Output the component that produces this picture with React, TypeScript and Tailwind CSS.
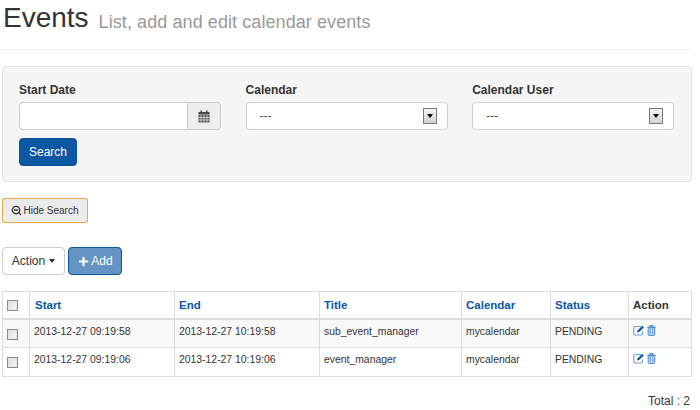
import React from 'react';
import { Plus, ZoomOut } from 'lucide-react';

const rows = [
  { start: '2013-12-27 09:19:58', end: '2013-12-27 10:19:58', title: 'sub_event_manager' },
  { start: '2013-12-27 09:19:06', end: '2013-12-27 10:19:06', title: 'event_manager' },
];

const Check = () => (
  <span className="block w-[11px] h-[11px] border border-[#8a8a8a] bg-gradient-to-br from-[#dcdcdc] to-[#fbfbfb] shadow-[inset_0_0_0_1px_#e4e4e4]" />
);

const CalendarIcon = () => (
  <svg width="12" height="13" viewBox="0 0 12 13">
    <rect x="0.5" y="2" width="11" height="2.5" fill="#444" />
    <rect x="2.5" y="0.5" width="1.5" height="2" fill="#444" />
    <rect x="8" y="0.5" width="1.5" height="2" fill="#444" />
    <rect x="0.5" y="5" width="11" height="7.5" fill="#555" />
    <path d="M3 5v7.5M6 5v7.5M9 5v7.5M.5 7.5h11M.5 10h11" stroke="#ddd" strokeWidth="0.8" />
  </svg>
);

const EditIcon = () => (
  <svg width="12" height="11" viewBox="0 0 12 11" fill="none">
    <path d="M8 1.5H2A1.2 1.2 0 0 0 .8 2.7v6.1A1.2 1.2 0 0 0 2 10h6.2a1.2 1.2 0 0 0 1.2-1.2V6.5" stroke="#6f9fd0" strokeWidth="1.1" />
    <path d="M4 7.6l.5-2L9.3.8l1.6 1.6-4.8 4.7z" fill="#0b57a4" />
  </svg>
);

const TrashIcon = () => (
  <svg width="9" height="11" viewBox="0 0 9 11" fill="none">
    <path d="M.3 2.2h8.4M3 2V.7h3V2" stroke="#2a6fb0" strokeWidth="1" />
    <rect x="1.2" y="3" width="6.6" height="7.4" rx="0.8" stroke="#428bca" strokeWidth="1" fill="#cfe0f0" />
    <path d="M3.2 4.2v5M5.8 4.2v5" stroke="#428bca" strokeWidth="0.9" />
  </svg>
);

const SelectBox = () => (
  <div className="relative w-[202px] h-7 bg-white border border-[#ccc] rounded flex items-center pl-[13px] text-xs text-[#555]">
    <span>---</span>
    <span className="absolute right-[10px] top-[5px] w-[14px] h-[16px] border border-[#777] bg-gradient-to-b from-[#f4f4f4] to-[#d4d4d4] flex items-center justify-center">
      <span className="w-0 h-0 border-x-[3px] border-x-transparent border-t-[4px] border-t-black" />
    </span>
  </div>
);

export default function App() {
  const th = 'border border-[#ddd] border-b-2 px-[4px] pt-[1px] text-left font-bold';
  const td = 'border border-[#ddd] px-[4px] pt-[5px] align-top font-normal';

  return (
    <div className="w-[700px] h-[410px] bg-white overflow-hidden font-['Liberation_Sans',Arial,sans-serif] text-xs text-[#333]">
      <div className="mx-[2px] w-[690px]">
        {/* Page header */}
        <div className="h-[50px] border-b border-[#eee] flex items-baseline pl-[1px]">
          <h1 className="text-[28px] leading-[35px] font-normal text-[#333]">Events</h1>
          <span className="ml-[10px] translate-y-px text-[18px] tracking-[0.08px] text-[#999]">List, add and edit calendar events</span>
        </div>

        {/* Search panel */}
        <div className="mt-4 h-[116px] bg-[#f5f5f5] border border-[#e3e3e3] rounded pl-4 pr-4 pt-4">
          <div className="flex gap-[24.6px]">
            <div className="w-[202px]">
              <div className="text-xs font-bold leading-[15px] mb-1 text-[#333]">Start Date</div>
              <div className="flex h-7">
                <input className="w-[169px] h-7 bg-white border border-[#ccc] rounded-l" />
                <span className="w-[34px] h-7 -ml-px bg-[#eee] border border-[#ccc] rounded-r flex items-center justify-center">
                  <CalendarIcon />
                </span>
              </div>
            </div>
            <div className="w-[202px]">
              <div className="text-xs font-bold leading-[15px] mb-1 text-[#333]">Calendar</div>
              <SelectBox />
            </div>
            <div className="w-[202px]">
              <div className="text-xs font-bold leading-[15px] mb-1 text-[#333]">Calendar User</div>
              <SelectBox />
            </div>
          </div>
          <button className="mt-2 w-[58px] h-7 bg-[#0b57a4] border border-[#0a4f96] rounded text-white text-xs">Search</button>
        </div>

        {/* Toggle */}
        <button className="mt-4 h-[25px] w-[86px] bg-[#ebebeb] border border-[#e5ad4f] rounded-[3px] flex items-center justify-center gap-[1px] text-[10px] text-[#333] shadow-[0_0_1px_#e5ad4f]">
          <ZoomOut size={11} strokeWidth={3} />
          <span>Hide Search</span>
        </button>

        {/* Toolbar */}
        <div className="mt-6 flex gap-[3px]">
          <button className="w-[63px] h-7 bg-white border border-[#ccc] rounded flex items-center justify-center gap-1 text-xs text-[#333]">
            Action
            <span className="w-0 h-0 border-x-[3.5px] border-x-transparent border-t-[4px] border-t-[#333]" />
          </button>
          <button className="w-[54px] h-7 bg-[#6394c3] border border-[#0b57a4] rounded flex items-center justify-center gap-[1px] text-xs text-white">
            <Plus size={13} strokeWidth={4} />
            Add
          </button>
        </div>

        {/* Events table */}
        <table className="mt-4 w-[689px] table-fixed border-collapse text-[10.4px] text-[#333]">
          <colgroup>
            <col className="w-[27px]" />
            <col className="w-[145px]" />
            <col className="w-[145px]" />
            <col className="w-[142px]" />
            <col className="w-[89px]" />
            <col className="w-[78px]" />
            <col className="w-[63px]" />
          </colgroup>
          <thead>
            <tr className="h-[27px] text-[11.5px]">
              <th className={th}><Check /></th>
              <th className={`${th} !pl-[5px] text-[#0b57a4]`}>Start</th>
              <th className={`${th} text-[#0b57a4]`}>End</th>
              <th className={`${th} text-[#0b57a4]`}>Title</th>
              <th className={`${th} text-[#0b57a4]`}>Calendar</th>
              <th className={`${th} text-[#0b57a4]`}>Status</th>
              <th className={th}>Action</th>
            </tr>
          </thead>
          <tbody>
            {rows.map((r, i) => (
              <tr key={r.start} className={`h-[29px] ${i === 0 ? 'bg-[#f9f9f9]' : 'bg-white'}`}>
                <td className={`${td} !pt-[9px]`}><Check /></td>
                <td className={td}>{r.start}</td>
                <td className={td}>{r.end}</td>
                <td className={td}>{r.title}</td>
                <td className={td}>mycalendar</td>
                <td className={td}>PENDING</td>
                <td className={td}>
                  <div className="flex items-center gap-[2px]">
                    <EditIcon />
                    <TrashIcon />
                  </div>
                </td>
              </tr>
            ))}
          </tbody>
        </table>

        <div className="mt-4 pr-[2px] text-right text-xs text-[#333]">Total : 2</div>
      </div>
    </div>
  );
}
